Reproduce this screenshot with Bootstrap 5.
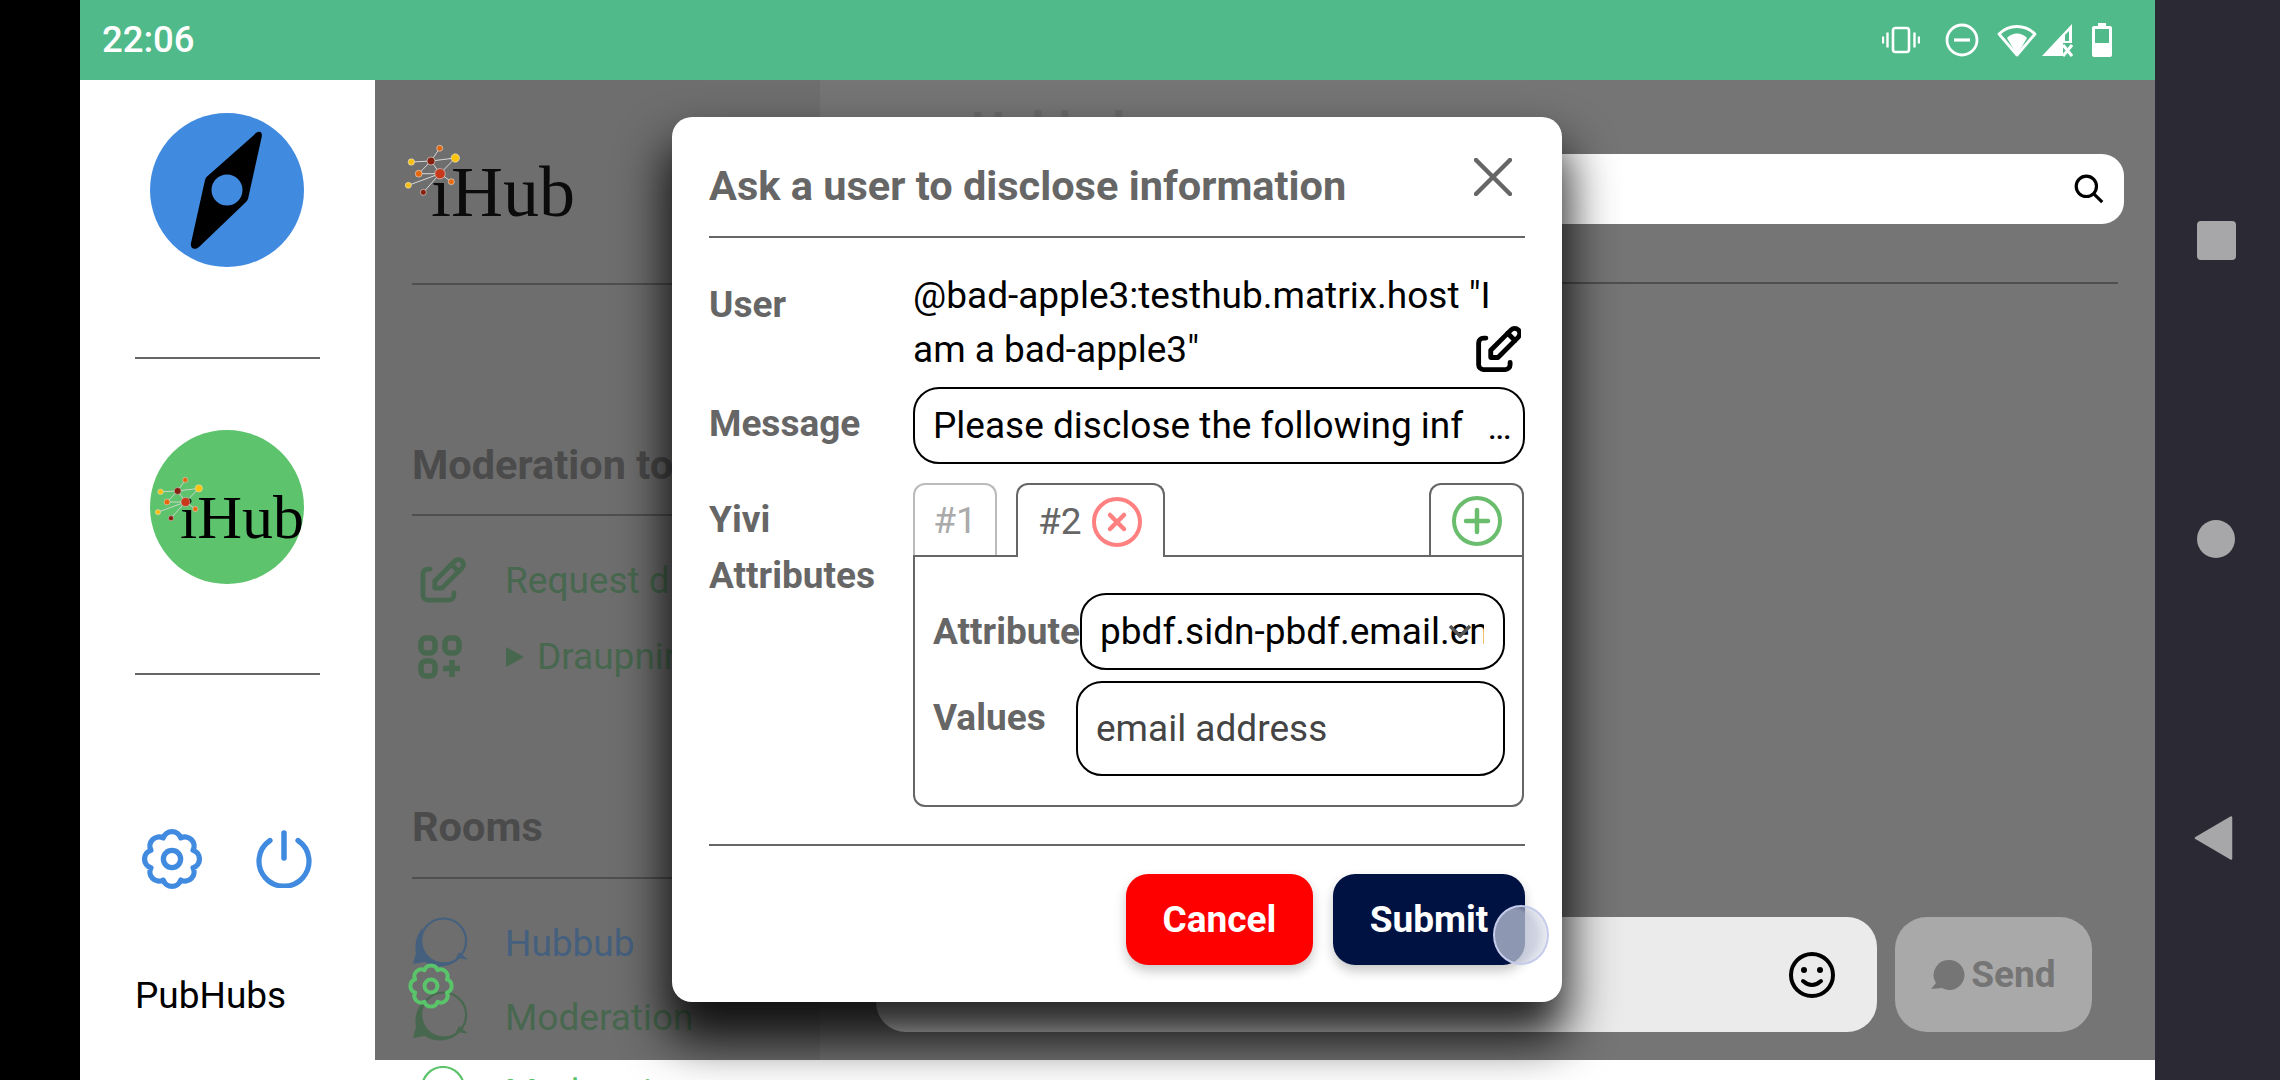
<!doctype html>
<html lang="en"><head><meta charset="utf-8"><title>PubHubs</title>
<link href="https://cdn.jsdelivr.net/npm/bootstrap@5.3.0/dist/css/bootstrap.min.css" rel="stylesheet">
<style>
html,body{margin:0;height:1080px;width:2280px;overflow:hidden;background:#000;font-family:Roboto,"Liberation Sans",sans-serif;}
.ph-screen{margin-left:80px;width:2075px;height:1080px;position:relative;overflow:hidden;background:#fff}
.ph-status{height:80px;background:#50ba8a;color:#fff;padding-left:22px;padding-right:43px}
.ph-clock{font-size:36.5px;font-weight:500}
.ph-nav{position:absolute;left:2155px;top:0;width:125px;height:1080px;background:#2b2933}
.ph-navsq{width:39px;height:39px;background:#a7a7aa;border-radius:4px;margin-top:221px;margin-left:42px}
.ph-navci{width:38px;height:38px;background:#a7a7aa;border-radius:50%;margin-top:260px;margin-left:42px}
.ph-navtri{display:block;margin-top:258px;margin-left:39px}
.ph-body{height:980px}
.ph-side{width:295px;flex:none;height:1000px;background:#fff;padding-top:33px;padding-right:1px;align-items:center}
.ph-disc{width:154px;height:154px;border-radius:50%;flex:none;overflow:hidden}
.ph-sep{width:185px;height:2px;background:#666;flex:none}
.ph-sidebtns{width:100%;padding-left:60px;gap:52px;margin-top:152px}
.ph-brand{width:100%;padding-left:55px;font-size:37px;margin-top:83px;line-height:44px;color:#000}
.ph-left{width:445px;flex:none;background:#6e6e6e;padding-left:37px;overflow:hidden;height:980px;position:relative}
.ph-rule{height:2px;background:#4f4f4f}
.ph-h{font-size:41.5px;font-weight:700;color:#4b4b4b;line-height:44px;white-space:nowrap}
.ph-item{font-size:37px;line-height:44px;white-space:nowrap}
.ph-green{color:#47684e}.ph-blue{color:#45607f}
.ph-main{flex:1;background:#757575;position:relative;height:980px;padding-right:37px}
.ph-topic{font-size:48px;font-weight:700;color:#6a6a6a;margin-left:151px;line-height:50px;margin-top:25px;height:50px}
.ph-search{height:70px;background:#fff;border-radius:22px;margin-left:100px;margin-right:-6px;margin-top:-1px;padding-right:20px}
.ph-mainrule{height:2px;background:#4f4f4f;margin-top:58px}
.ph-composer{position:absolute;left:56px;top:837px;gap:18px}
.ph-msgbar{width:1001px;height:115px;background:#ebebeb;border-radius:30px;padding-right:41px}
.ph-send{width:197px;height:115px;background:#a9a9a9;border-radius:32px;color:#757575;font-size:37px;font-weight:700;gap:6px}
.ph-strip-row{position:absolute;left:295px;right:0;top:1066px;height:60px;padding-left:46px;gap:40px;color:#5dc36c;font-size:37px}
.ph-gearfl{position:absolute;left:327px;top:962px;color:#5ac46b}
.ph-dialog{position:absolute;left:592px;top:117px;width:890px;height:885px;margin:0;background:#fff;border:0;border-radius:20px;box-shadow:0 32px 48px 6px rgba(0,0,0,.85);padding:0 37px;color:#666}
.ph-head{height:121px;border-bottom:2px solid #666;padding:0;border-radius:0}
.ph-title{font-size:41.5px;font-weight:700;color:#666;margin:0;line-height:44px;padding-top:47px}
.ph-x{margin-top:41px;margin-right:13px;padding:0;background:none;border:0;line-height:0}
.ph-content{padding:0;display:block;flex:none}
.ph-lbl{width:204px;flex:none;font-size:37px;font-weight:700;color:#666;line-height:55px}
.ph-user{font-size:37px;color:#000;line-height:54px;position:relative;width:611px;height:110px}
.ph-pen{position:absolute;right:3px;top:57px}
.ph-field{border:2px solid #000;border-radius:26px;font-size:37px;color:#000;background:#fff;box-shadow:none}
.ph-field::placeholder{color:#444;opacity:1}
.ph-msg{width:612px;height:77px;padding:0 12px 0 18px;overflow:hidden;gap:8px}
.ph-msginput{flex:1;min-width:0;border:0;outline:0;padding:0;font-size:37px;color:#000;background:transparent}
.ph-dots{font-size:26px;font-weight:700;line-height:1;padding-top:8px}
.ph-tabs{width:611px;height:72px;gap:19px;border:0;margin:0}
.ph-tab{height:72px;border:2px solid #666;border-bottom:0;border-radius:12px 12px 0 0;background:#fff;font-size:37px;color:#666;position:relative;z-index:1;padding-top:2px}
.ph-tab1{width:84px;border-color:#bbb;color:#aaa;justify-content:center}
.ph-tab2{width:149px;padding-left:20px;gap:10px;height:74px;margin-bottom:-2px}
.ph-tabadd{width:95px;justify-content:center;margin-left:auto}
.ph-box{width:611px;height:252px;border:2px solid #666;border-radius:0 0 12px 12px;padding:36px 17px 0 18px}
.ph-lbl2{font-size:37px;font-weight:700;color:#666;line-height:44px;flex:none;white-space:nowrap}
.ph-sel{width:425px;height:77px;padding:0 18px;overflow:hidden;font-size:37px;color:#000;background:#fff;white-space:nowrap;position:relative;line-height:73px;border:2px solid #000;border-radius:26px;flex:none}
.ph-seltext{display:block;overflow:hidden;width:384px}
.ph-chev{position:absolute;right:31px;top:29px}
.ph-val{width:429px;height:95px;padding:0 18px;flex:none;margin-left:auto}
.ph-foot{position:absolute;left:37px;right:37px;top:727px;height:130px;border-top:2px solid #666;padding:28px 0 0;gap:20px;align-items:flex-start;justify-content:flex-end;border-radius:0;flex-wrap:nowrap}
.ph-btn{height:91px;border:0;border-radius:22px;font-size:37px;font-weight:700;color:#fff;margin:0;box-shadow:0 6px 12px rgba(0,0,0,.22);padding:0}
.ph-btn:hover,.ph-btn:focus{color:#fff}
.ph-cancel{width:187px;background:#f00}.ph-cancel:hover{background:#f00}
.ph-submit{width:192px;background:#001242}.ph-submit:hover{background:#001242}
.ph-touch{position:absolute;left:821px;top:788px;width:56px;height:60px;border-radius:50%;border:2px solid #c5cbea;background:radial-gradient(circle at 30% 50%,rgba(190,196,215,.75) 55%,rgba(255,255,255,0) 100%)}
</style></head>
<body>
<svg width="0" height="0" class="position-absolute">
<defs>
<g id="ph-net">
<path d="M49.700 18.300 41 31M21.300 32 41 31 65.300 28 50 43.700 41 31 28.700 43.700H50L18.300 55.300M50 43.700 33.300 62.300M50 43.700 61.300 51.700" fill="none" stroke="#d8d8d8" stroke-width="1"/>
<g stroke="#e4e4e4" stroke-width=".6">
<circle cx="49.700" cy="18.300" r="3" fill="#e0660f"/><circle cx="21.300" cy="32" r="3.200" fill="#f5c012"/>
<circle cx="41" cy="31" r="4" fill="#86200f"/><circle cx="65.300" cy="28" r="4.200" fill="#fcc40c"/>
<circle cx="28.700" cy="43.700" r="3.400" fill="#e8680c"/><circle cx="50" cy="43.700" r="5.200" fill="#c8381a"/>
<circle cx="61.300" cy="51.700" r="3" fill="#ea6a10"/><circle cx="18.300" cy="55.300" r="3" fill="#f5c012"/><circle cx="33.300" cy="62.300" r="3" fill="#86200f"/>
</g></g>
<g id="ph-gear" fill="none" stroke="currentColor" stroke-width="1.900" stroke-linejoin="round">
<path d="M15.140 4.420A3.300 3.300 0 0 1 19.580 8.860A3.300 3.300 0 0 1 19.580 15.140A3.300 3.300 0 0 1 15.140 19.580A3.300 3.300 0 0 1 8.860 19.580A3.300 3.300 0 0 1 4.420 15.140A3.300 3.300 0 0 1 4.420 8.860A3.300 3.300 0 0 1 8.860 4.420A3.300 3.300 0 0 1 15.140 4.420Z"/>
<circle cx="12" cy="12" r="3.100"/></g>
<g id="ph-edit" fill="none" stroke="currentColor" stroke-width="2" stroke-linecap="round" stroke-linejoin="round">
<path d="M7 7H6a2 2 0 0 0-2 2v9a2 2 0 0 0 2 2h9a2 2 0 0 0 2-2v-1"/><path d="M20.385 6.585a2.100 2.100 0 0 0-2.970-2.970L9 12v3h3z"/><path d="M16 5l3 3"/></g>
<g id="ph-bubble"><circle cx="30.600" cy="24" r="22.500" fill="none" stroke="currentColor" stroke-width="2.200"/><path d="M46 35 55 42.500 43 41Z" fill="currentColor"/><path d="M10 10C4 18 1 26 3 36L0 47 12 45C22 52 36 51 46 42 30 50 14 44 10 30 8 22 8 16 10 10Z" fill="currentColor"/></g>
</defs></svg>

<div class="ph-nav">
<div class="ph-navsq"></div><div class="ph-navci"></div>
<svg class="ph-navtri" width="40" height="44" viewBox="0 0 40 44"><path d="M37 1.500 2 22 37 42.500Z" fill="#a7a7aa" stroke="#a7a7aa" stroke-width="2.500" stroke-linejoin="round"/></svg>
</div>

<div class="ph-screen">
<header class="ph-status d-flex align-items-center">
<span class="ph-clock">22:06</span>
<div class="ms-auto d-flex align-items-center text-white">
<svg width="38" height="28" viewBox="0 0 38 28" class="me-4"><rect x="11" y="2" width="16" height="24" rx="2.500" fill="none" stroke="#fff" stroke-width="2.600"/><path d="M5.500 6.500v15M32.500 6.500v15M1 10.500v7M37 10.500v7" stroke="#fff" stroke-width="2.400"/></svg>
<svg width="34" height="34" viewBox="0 0 34 34" style="margin-left:1px"><circle cx="17" cy="17" r="15" fill="none" stroke="#fff" stroke-width="2.800"/><path d="M9 17h16" stroke="#fff" stroke-width="3.200"/></svg>
<svg width="40" height="34" viewBox="0 0 40 34" style="margin-left:18px"><path d="M20 32 2 11C12 1 28 1 38 11Z" fill="none" stroke="#fff" stroke-width="2.800" stroke-linejoin="round"/><path d="M20 32 10 15C15 9 25 9 30 15Z" fill="#fff"/></svg>
<svg width="32" height="34" viewBox="0 0 32 34" style="margin-left:4px"><path d="M1 33 31 1V20H22V33Z" fill="#fff"/><path d="M22 22 31 33M31 22 22 33" stroke="#fff" stroke-width="3"/><path d="M28 8V18H24V12Z" fill="#50ba8a"/></svg>
<svg width="20" height="34" viewBox="0 0 20 34" style="margin-left:19px"><path d="M6 0h8v3h4a2 2 0 0 1 2 2v27a2 2 0 0 1-2 2H2a2 2 0 0 1-2-2V5a2 2 0 0 1 2-2h4Z" fill="#fff"/><rect x="3" y="6" width="14" height="14" fill="#50ba8a"/></svg>
</div>
</header>

<div class="ph-body d-flex">
<aside class="ph-side d-flex flex-column">
<div class="ph-disc d-flex" style="background:#408ae0">
<svg width="154" height="154" viewBox="0 0 154 154"><path d="M104 22C108 17 113 18 111.700 24L98 86Q97 88 96 89L49 134C44 138 40 135 41 130L55 67Q55.500 65 56.500 64Z" fill="#000"/><circle cx="77" cy="77" r="15.500" fill="#408ae0"/></svg>
</div>
<div class="ph-sep" style="margin-top:90px"></div>
<div class="ph-disc" style="background:#5dc36c;margin-top:71px">
<svg width="154" height="154" viewBox="0 0 154 154"><text x="30" y="108" font-family="Liberation Serif" font-size="62">iHub</text><use href="#ph-net" transform="translate(-8 34) scale(.87)"/></svg>
</div>
<div class="ph-sep" style="margin-top:89px"></div>
<div class="ph-sidebtns d-flex align-items-center">
<svg width="64" height="64" viewBox=".5 .5 23 23" style="color:#408ae0"><use href="#ph-gear"/></svg>
<svg width="56" height="58" viewBox="0 0 56 58"><path d="M14 10.500A25 25 0 1 0 42 10.500" fill="none" stroke="#408ae0" stroke-width="5.200" stroke-linecap="round"/><path d="M28 3V28" stroke="#408ae0" stroke-width="5.500" stroke-linecap="round"/></svg>
</div>
<div class="ph-brand">PubHubs</div>
</aside>

<section class="ph-left">
<svg width="190" height="100" viewBox="0 0 190 100" style="display:block;margin-top:50px;margin-left:-22px"><text x="41" y="86" font-family="Liberation Serif" font-size="72" fill="#0b0b0b">iHub</text><use href="#ph-net"/></svg>
<div class="ph-rule" style="margin-top:53px;margin-right:-1px"></div>
<div class="ph-h" style="margin-top:158px">Moderation tools</div>
<div class="ph-rule" style="margin-top:27px"></div>
<div class="d-flex align-items-center ph-item ph-green" style="margin-top:40px;margin-left:5px;gap:38px">
<svg width="50" height="50" viewBox="1.500 1.500 21 21" style="color:#47684e;flex:none"><use href="#ph-edit"/></svg>Request disclosure</div>
<div class="d-flex align-items-center ph-item ph-green" style="margin-top:29px;margin-left:6px;gap:44px">
<svg width="44" height="44" viewBox="0 0 44 44" fill="none" stroke="#47684e" stroke-width="5.500" style="flex:none"><rect x="3" y="3" width="14" height="15" rx="5"/><rect x="27" y="3" width="14" height="15" rx="5"/><rect x="3" y="26" width="14" height="15" rx="5"/><path d="M34 25v17M25 33.500h17"/></svg>
<span class="d-flex align-items-center" style="gap:13px"><svg width="18" height="20" viewBox="0 0 18 20"><path d="M0 0 18 10 0 20Z" fill="#47684e"/></svg>Draupnir</span></div>
<div class="ph-h" style="margin-top:126px">Rooms</div>
<div class="ph-rule" style="margin-top:28px"></div>
<div class="d-flex align-items-center ph-item ph-blue" style="margin-top:38px;margin-left:1px;gap:37px">
<svg width="55" height="53" viewBox="0 0 55 53" style="color:#45607f;flex:none"><use href="#ph-bubble"/></svg>Hubbub</div>
<div class="d-flex align-items-center ph-item ph-green" style="margin-top:21px;margin-left:1px;gap:37px">
<svg width="55" height="53" viewBox="0 0 55 53" style="color:#47684e;flex:none"><use href="#ph-bubble"/></svg>Moderation</div>
</section>

<main class="ph-main">
<div class="ph-topic">Hubbub</div>
<div class="ph-search d-flex align-items-center justify-content-end">
<svg width="30" height="30" viewBox="0 0 34 34" fill="none" stroke="#000" stroke-width="3.600"><circle cx="14" cy="14" r="11.500"/><path d="M22.500 22.500 32 32"/></svg>
</div>
<div class="ph-mainrule"></div>
<div class="ph-composer d-flex">
<div class="ph-msgbar d-flex align-items-center justify-content-end">
<svg width="48" height="48" viewBox="0 0 48 48" fill="none" stroke="#000"><circle cx="24" cy="24" r="21" stroke-width="4"/><circle cx="16" cy="19" r="3" fill="#000" stroke="none"/><circle cx="32" cy="19" r="3" fill="#000" stroke="none"/><path d="M15 30Q24 38 33 30" stroke-width="4" stroke-linecap="round"/></svg>
</div>
<div class="ph-send d-flex align-items-center justify-content-center">
<svg width="34" height="32" viewBox="0 0 34 32"><path d="M19 1A15 15 0 1 1 11 29L0 30 5 24A15 15 0 0 1 19 1Z" fill="#757575"/></svg>Send</div>
</div>
</main>
</div>

<div class="ph-strip-row d-flex align-items-start">
<svg width="44" height="44" viewBox="0 0 44 44" style="flex:none"><circle cx="22" cy="22" r="21" fill="none" stroke="#5dc36c" stroke-width="2.200"/></svg>
<span style="line-height:44px;margin-top:5px">Moderation</span>
</div>
<svg class="ph-gearfl" width="48" height="48" viewBox=".5 .5 23 23"><use href="#ph-gear"/></svg>

<div class="modal-content ph-dialog" role="dialog">
<div class="modal-header ph-head align-items-start justify-content-between">
<h5 class="modal-title ph-title">Ask a user to disclose information</h5>
<button type="button" class="ph-x" aria-label="Close"><svg width="38" height="38" viewBox="0 0 38 38"><path d="M2 2 36 36M36 2 2 36" stroke="#666" stroke-width="4.500" stroke-linecap="round"/></svg></button>
</div>
<div class="modal-body ph-content">
<div class="d-flex" style="margin-top:31px">
<div class="ph-lbl" style="padding-top:8px">User</div>
<div class="ph-user">@bad-apple3:testhub.matrix.host "I am a bad-apple3"
<svg class="ph-pen" width="46" height="46" viewBox="2.500 2 19 19" style="color:#000"><use href="#ph-edit"/></svg></div>
</div>
<div class="d-flex align-items-center" style="margin-top:8px">
<div class="ph-lbl pb-1">Message</div>
<div class="ph-field ph-msg d-flex align-items-center"><input class="ph-msginput" value="Please disclose the following inf" aria-label="Message"><span class="ph-dots">...</span></div>
</div>
<div class="d-flex" style="margin-top:19px">
<div class="ph-lbl" style="padding-top:9px;line-height:56px">Yivi<br>Attributes</div>
<div>
<div class="d-flex ph-tabs">
<div class="d-flex align-items-center ph-tab ph-tab1">#1</div>
<div class="d-flex align-items-center ph-tab ph-tab2">#2
<svg width="50" height="50" viewBox="0 0 50 50" fill="none" stroke="#ff8080" stroke-width="4"><circle cx="25" cy="25" r="23"/><path d="M18 18 32 32M32 18 18 32" stroke-width="4.500" stroke-linecap="round"/></svg></div>
<div class="d-flex align-items-center ph-tab ph-tabadd">
<svg width="50" height="50" viewBox="0 0 50 50" fill="none" stroke="#6bbd6e" stroke-width="4"><circle cx="25" cy="25" r="23"/><path d="M25 14V36M14 25H36" stroke-width="4.500" stroke-linecap="round"/></svg></div>
</div>
<div class="ph-box">
<div class="d-flex align-items-center" style="height:77px">
<div class="ph-lbl2" style="width:147px">Attribute</div>
<div class="ph-sel"><span class="ph-seltext">pbdf.sidn-pbdf.email.email</span>
<svg class="ph-chev" width="24" height="14" viewBox="0 0 24 14" fill="none" stroke="#555" stroke-width="3.500"><path d="M2 2 12 12 22 2"/></svg></div>
</div>
<div class="d-flex align-items-start" style="margin-top:11px">
<div class="ph-lbl2" style="margin-top:15px">Values</div>
<input class="form-control ph-field ph-val" placeholder="email address">
</div>
</div>
</div>
</div>
</div>
<div class="modal-footer ph-foot d-flex">
<button type="button" class="btn ph-btn ph-cancel">Cancel</button>
<button type="button" class="btn ph-btn ph-submit">Submit</button>
</div>
<div class="ph-touch"></div>
</div>
</div>
</body></html>
